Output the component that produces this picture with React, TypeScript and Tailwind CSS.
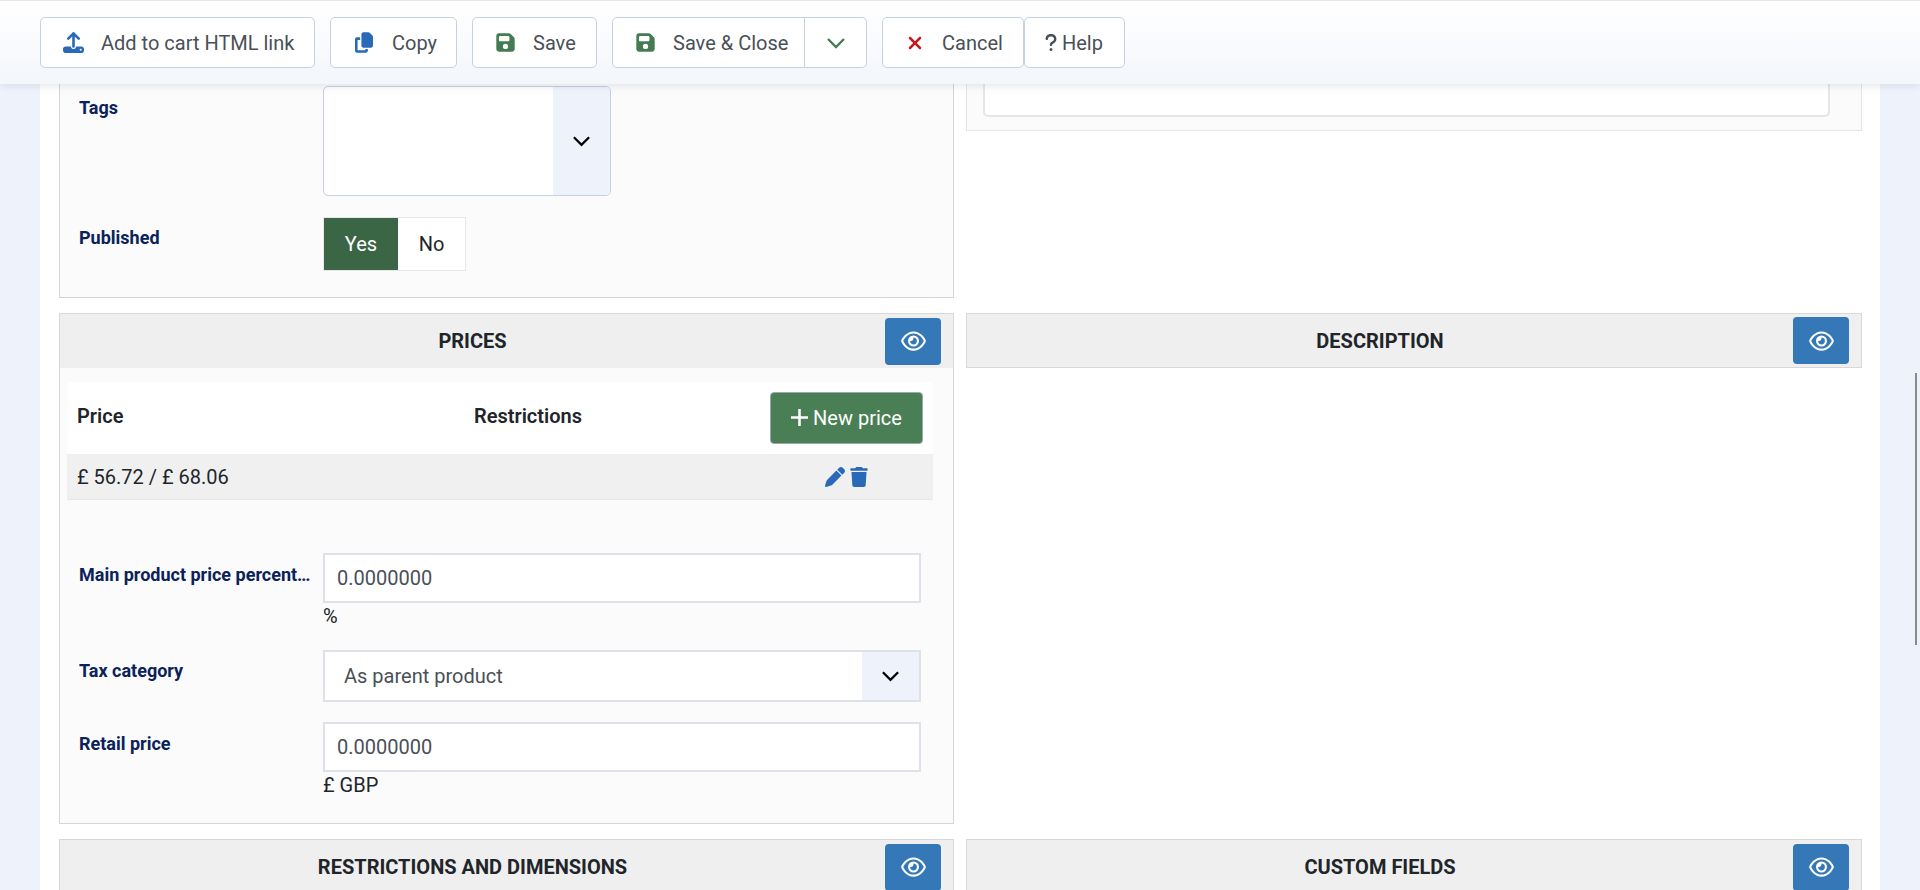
import React from "react";
import { FaUpload, FaCopy, FaFloppyDisk, FaXmark, FaQuestion, FaRegEye, FaPen, FaTrash } from "react-icons/fa6";

const Chevron = ({ className }: { className: string }) => (
  <svg viewBox="0 0 20 12" className={className} fill="none" stroke="currentColor" strokeWidth="2.4">
    <path d="M2 2l8 8 8-8" />
  </svg>
);

const ToolButton = ({ icon, label, className }: { icon: React.ReactNode; label: string; className: string }) => (
  <button className={`flex items-center h-[51px] bg-white border border-[#c5d0e0] rounded-[5px] text-[20px] text-[#495057] ${className}`}>
    {icon}
    <span>{label}</span>
  </button>
);

const Header = ({ title, bordered }: { title: string; bordered?: boolean }) => (
  <div className={`flex items-center h-[55px] pr-[12px] bg-[#efefef] border-[#d8d8d8] ${bordered ? "border" : "border-t border-x"}`}>
    <span className="flex-1 text-center text-[20px] font-bold text-[#212529] uppercase">{title}</span>
    <button className="w-[56px] h-[47px] flex items-center justify-center bg-[#3478b7] rounded-[4px] text-white">
      <FaRegEye className="w-[25px] h-[22px]" />
    </button>
  </div>
);

const Label = ({ children, className }: { children: React.ReactNode; className: string }) => (
  <div className={`w-[245px] shrink-0 pr-[12px] text-[18px] leading-[24px] font-bold text-[#0a2259] truncate ${className}`}>{children}</div>
);

const TextInput = ({ h, value }: { h: string; value: string }) => (
  <div className={`flex items-center bg-white border-2 border-[#dee2e8] pl-[12px] text-[20px] text-[#495057] ${h}`}>{value}</div>
);

export default function App() {
  return (
    <div className="h-[890px] overflow-hidden bg-[#eef3fb] relative" style={{ fontFamily: "Roboto, sans-serif" }}>
      <header className="relative z-10 h-[84px] flex items-start pt-[16px] pl-[40px] border-t border-[#e4e7ec] bg-gradient-to-b from-white to-[#f3f6fb] shadow-[0_2px_8px_rgba(40,60,100,0.12)]">
        <ToolButton
          className="w-[275px] pl-[22px] gap-[17px]"
          icon={<FaUpload className="w-[21px] h-[21px] text-[#2a69b8]" />}
          label="Add to cart HTML link"
        />
        <ToolButton
          className="ml-[15px] w-[127px] pl-[24px] gap-[19px]"
          icon={<FaCopy className="w-[18px] h-[21px] text-[#2a69b8]" />}
          label="Copy"
        />
        <ToolButton
          className="ml-[15px] w-[125px] pl-[23px] gap-[18px]"
          icon={<FaFloppyDisk className="w-[19px] h-[21px] text-[#457b52]" />}
          label="Save"
        />
        <div className="ml-[15px] flex h-[51px] w-[255px] bg-white border border-[#c5d0e0] rounded-[5px] text-[20px] text-[#495057]">
          <div className="flex items-center w-[192px] pl-[23px] gap-[18px] border-r border-[#c5d0e0]">
            <FaFloppyDisk className="w-[19px] h-[21px] text-[#457b52]" />
            <span>Save &amp; Close</span>
          </div>
          <div className="flex-1 flex items-center justify-center text-[#457b52]">
            <Chevron className="w-[20px] h-[12px]" />
          </div>
        </div>
        <ToolButton
          className="ml-[15px] w-[142px] pl-[24px] gap-[19px]"
          icon={<FaXmark className="w-[16px] h-[20px] text-[#c8171f]" />}
          label="Cancel"
        />
        <ToolButton
          className="w-[101px] pl-[20px] gap-[5px]"
          icon={<FaQuestion className="w-[12px] h-[21px] text-[#495057]" />}
          label="Help"
        />
      </header>

      <main className="mx-[40px] -mt-[10px] bg-white pl-[19px] pr-[18px] grid grid-cols-[895px_896px] gap-x-[12px] gap-y-[15px] items-start">
        <section className="h-[224px] bg-[#fbfbfb] border border-[#d5d5d5] pl-[19px] pr-[10px]">
          <div className="flex mt-[11px]">
            <Label className="pt-[10px]">Tags</Label>
            <div className="flex w-[288px] h-[110px] -ml-[1px] bg-white border border-[#c5d0e0] rounded-[5px] overflow-hidden">
              <div className="flex-1" />
              <div className="w-[57px] bg-[#eef3fb] flex items-center justify-center text-black">
                <Chevron className="w-[19px] h-[12px]" />
              </div>
            </div>
          </div>
          <div className="flex mt-[21px]">
            <Label className="pt-[9px]">Published</Label>
            <div className="flex w-[143px] h-[54px] -ml-[1px] bg-white border border-[#e8e8e8] text-[20px]">
              <div className="w-[74px] bg-[#3a6645] text-white flex items-center justify-center">Yes</div>
              <div className="flex-1 text-[#212529] flex items-center justify-center">No</div>
            </div>
          </div>
        </section>

        <section className="h-[57px] -mb-[1px] bg-[#fbfbfb] border border-[#e6e6e6] pl-[16px] pr-[31px]">
          <div className="h-[42px] bg-white border-2 border-t-0 border-[#e6e6e6] rounded-b-[5px]" />
        </section>

        <section>
          <Header title="Prices" />
          <div className="h-[456px] bg-[#fbfbfb] border border-t-0 border-[#d5d5d5] pt-[14px]">
            <div className="ml-[7px] mr-[20px]">
              <div className="flex items-center h-[72px] bg-white pl-[10px] text-[20px] font-semibold text-[#212529]">
                <span className="w-[397px] -mt-[4px]">Price</span>
                <span className="-mt-[4px]">Restrictions</span>
                <button className="ml-auto mr-[10px] -mt-[1px] flex items-center justify-center gap-[5px] w-[153px] h-[52px] bg-[#4a7f55] border border-[#9aa] rounded-[4px] text-white text-[20px] font-normal">
                  <svg viewBox="0 0 16 16" className="w-[17px] h-[17px]" fill="none" stroke="currentColor" strokeWidth="2.4">
                    <path d="M8 0v16M0 8h16" />
                  </svg>
                  New price
                </button>
              </div>
              <div className="flex items-center h-[46px] bg-[#f0f0f0] border-b border-[#e4e6ea] pl-[10px] text-[20px] text-[#212529]">
                <span>£ 56.72 / £ 68.06</span>
                <div className="ml-auto mr-[65px] flex items-center gap-[5px] text-[#2a69b8]">
                  <FaPen className="w-[20px] h-[20px]" />
                  <FaTrash className="w-[18px] h-[20px]" />
                </div>
              </div>
            </div>

            <div className="pl-[19px] pr-[32px] mt-[53px]">
              <div className="flex">
                <Label className="pt-[10px]">Main product price percent...</Label>
                <div className="flex-1 -ml-[1px]">
                  <TextInput h="h-[50px]" value="0.0000000" />
                  <div className="text-[20px] leading-[26px] text-[#212529]">%</div>
                </div>
              </div>
              <div className="flex mt-[21px]">
                <Label className="pt-[9px]">Tax category</Label>
                <div className="flex-1 -ml-[1px] flex h-[52px] bg-white border-2 border-[#dee2e8] text-[20px] text-[#495057]">
                  <div className="flex-1 flex items-center pl-[19px]">As parent product</div>
                  <div className="w-[57px] bg-[#eef3fb] flex items-center justify-center text-black">
                    <Chevron className="w-[19px] h-[12px]" />
                  </div>
                </div>
              </div>
              <div className="flex mt-[20px]">
                <Label className="pt-[10px]">Retail price</Label>
                <div className="flex-1 -ml-[1px]">
                  <TextInput h="h-[50px]" value="0.0000000" />
                  <div className="text-[20px] leading-[26px] text-[#212529]">£ GBP</div>
                </div>
              </div>
            </div>
          </div>
        </section>

        <section>
          <Header title="Description" bordered />
        </section>

        <section>
          <Header title="Restrictions and dimensions" />
        </section>
        <section>
          <Header title="Custom fields" />
        </section>
      </main>

      <div className="absolute top-[373px] right-[3px] w-[2px] h-[272px] bg-[#8a8a8a]" />
    </div>
  );
}
